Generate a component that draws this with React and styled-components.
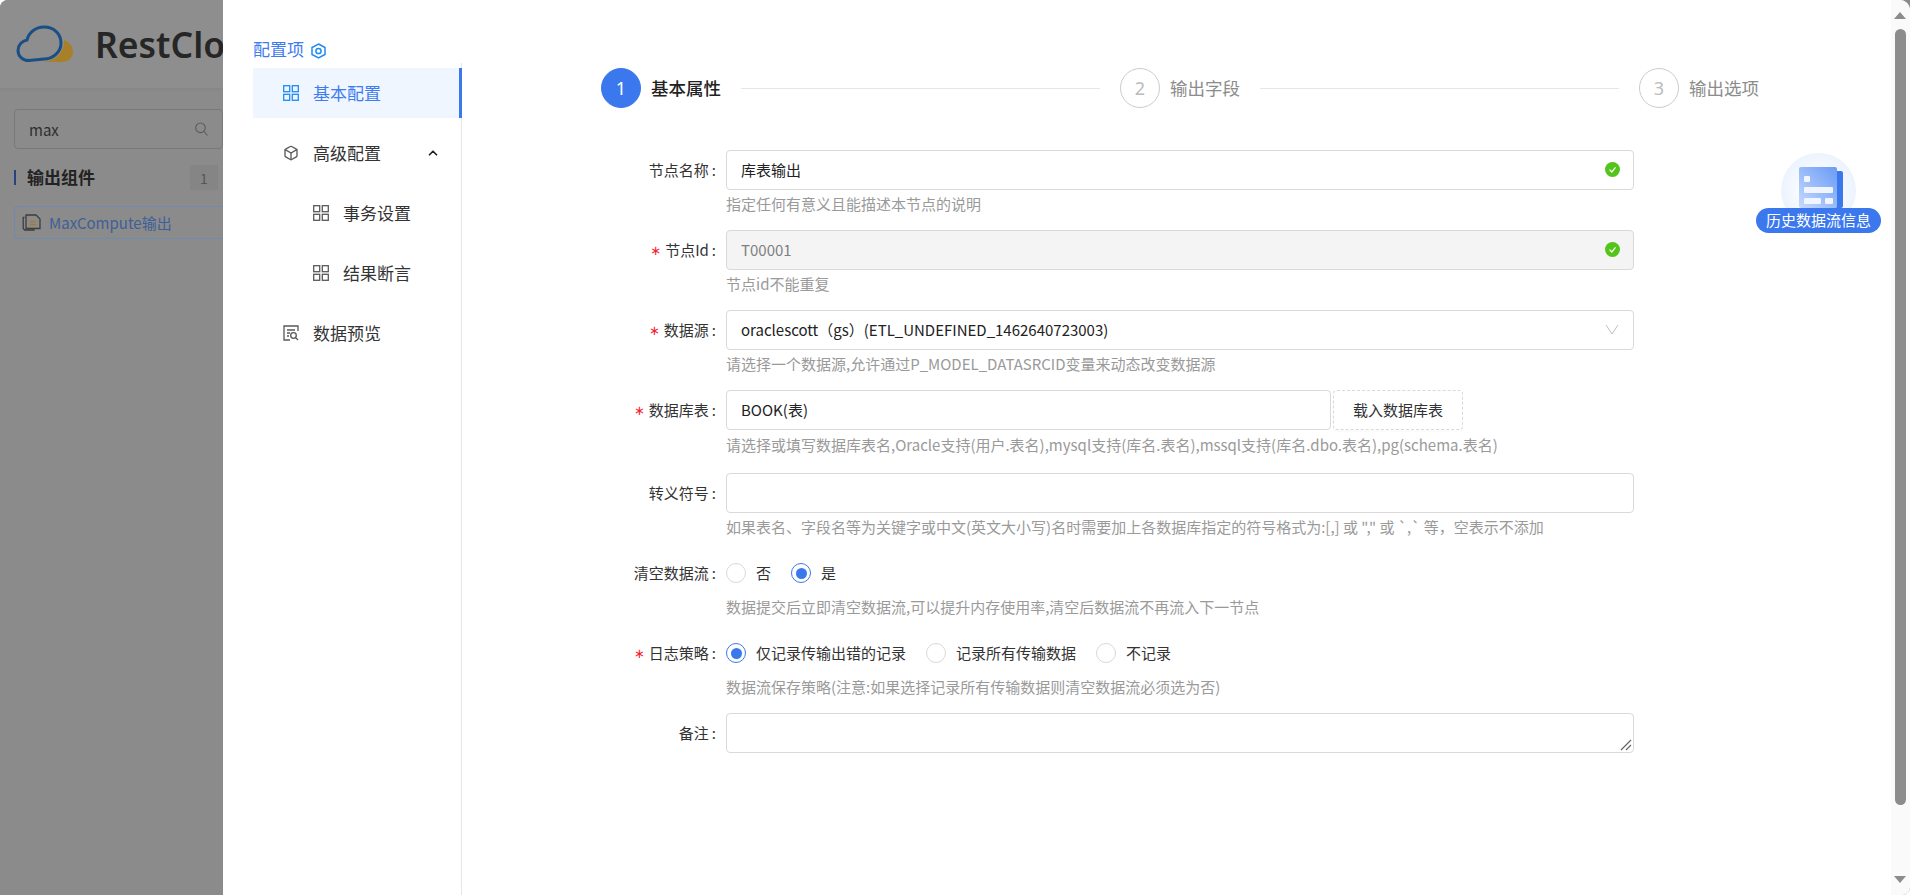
import React from 'react';
import styled, { createGlobalStyle } from 'styled-components';
import { LuBox, LuChevronUp } from 'react-icons/lu';

const Global = createGlobalStyle`
  html, body { margin: 0; padding: 0; overflow: hidden; background: #fff; }
  * { box-sizing: border-box; }
  body { font-family: "Noto Sans CJK SC", "Noto Sans", sans-serif; font-size: 15px; color: #333; }
`;
const Page = styled.div`position: relative; width: 1910px; height: 895px; overflow: hidden; background: #8b8b8b; border-radius: 8px 0 8px 0;`;
const Backdrop = styled.aside`width: 223px; height: 100%; overflow: hidden; display: flex; flex-direction: column;`;
const TopBar = styled.header`height: 88px; padding: 24px 0 0 16px; display: flex; align-items: flex-start; gap: 21px; background: #8e8e8e; box-shadow: 0 1px 3px rgba(0,0,0,.05); flex: none; white-space: nowrap;`;
const LogoMark = styled.svg`flex: none; margin-top: 1px;`;
const Brand = styled.div`font: 600 35.5px/40px "Noto Sans", sans-serif; color: #262626;`;
const SearchBox = styled.div`margin: 21px 0 0 14px; width: 209px; height: 40px; border: 1px solid #787878; border-radius: 4px; display: flex; align-items: center; padding: 0 14px; justify-content: space-between; color: #2e2e2e; flex: none;`;
const GroupRow = styled.div`margin: 16px 0 0 14px; height: 25px; width: 204px; display: flex; align-items: center; justify-content: space-between;`;
const GroupTitle = styled.div`border-left: 2px solid #26437f; padding-left: 11px; height: 15px; line-height: 14px; font-size: 17px; font-weight: 700; color: #222;`;
const GroupCount = styled.div`width: 28px; height: 25px; background: #858585; color: #555; text-align: center; line-height: 27px; font-size: 14px;`;
const CompItem = styled.div`margin: 16px 0 0 14px; height: 33px; width: 220px; border: 1px solid #6e8aad; border-right: 0; border-radius: 4px 0 0 4px; display: flex; align-items: center; padding-left: 7px; gap: 8px; color: #3e5f98; white-space: nowrap; flex: none;`;

const Drawer = styled.div`position: absolute; top: 0; right: 0; bottom: 0; left: 223px; background: #fff; display: flex; border-radius: 0 10px 8px 0;`;
const Sidebar = styled.nav`width: 239px; flex: none; padding: 37px 0 0 30px;`;
const SideTitle = styled.div`height: 26px; padding-bottom: 2px; display: flex; align-items: center; gap: 7px; font-size: 17px; line-height: 24px; color: #3f7cf0;`;
const TitleIcon = styled.span`display: flex; margin-top: 3px;`;
const Menu = styled.ul`margin: 0; padding: 5px 0 0; list-style: none; border-right: 1px solid #e6e6e6; height: 832px; display: flex; flex-direction: column; gap: 10px;`;
const Item = styled.li`height: 50px; display: flex; align-items: center; padding-left: ${p => p.$sub ? 60 : 30}px; gap: 14px; font-size: 17px; color: ${p => p.$active ? '#3f7cf0' : '#333'}; background: ${p => p.$active ? '#eff6ff' : 'transparent'}; border-right: ${p => p.$active ? '3px solid #3b78ee' : '0'}; margin-right: ${p => p.$active ? '-1px' : '0'};`;
const ItemText = styled.span`margin-bottom: 2px;`;
const Caret = styled.span`margin-left: auto; margin-right: 21px; display: flex; color: #222;`;

const Main = styled.main`flex: 1; min-width: 0; position: relative; padding: 68px 0 0 139px;`;
const Steps = styled.ol`margin: 0; padding: 0; list-style: none; display: flex; align-items: center; width: 1158px; height: 40px;`;
const Step = styled.li`display: flex; align-items: center; gap: 10px; flex: none; font-size: 17.5px; color: ${p => p.$on ? '#222' : '#8c8c8c'}; font-weight: ${p => p.$on ? 500 : 400};`;
const StepText = styled.span`margin-bottom: 2px;`;
const StepDot = styled.span`width: 40px; height: 40px; border-radius: 50%; display: flex; align-items: center; justify-content: center; font: 18px "Noto Sans", sans-serif; background: ${p => p.$on ? '#3b78ee' : '#fff'}; color: ${p => p.$on ? '#fff' : '#bbb'}; border: 1px solid ${p => p.$on ? '#3b78ee' : '#ccc'};`;
const StepLine = styled.li`flex: 1; height: 1px; background: #e6e6e6; margin: 0 20px;`;

const Form = styled.div`margin: 42px 0 0 0; display: flex; flex-direction: column;`;
const Row = styled.div`display: grid; grid-template-columns: 726px 1fr; margin-left: -601px; min-height: 80px; margin-bottom: ${p => p.$extra || 0}px; align-items: start;`;
const Label = styled.label`grid-column: 1; justify-self: end; height: 40px; padding: 0 10px 2px 0; font-size: 15px; color: #333; display: flex; align-items: center; white-space: nowrap;
  &::after { content: ':'; margin-left: 3px; }`;
const Star = styled.span`color: #f5222d; font-size: 13px; margin-right: 4px; font-family: "DejaVu Sans", sans-serif; line-height: 1; margin-top: 2px;`;
const Field = styled.div`grid-column: 2; width: ${p => p.$w || 908}px;`;
const Line = styled.div`display: flex; gap: 2px;`;
const InputBox = styled.div`flex: 1; height: 40px; border: 1px solid #d9d9d9; border-radius: 4px; background: ${p => p.$off ? '#f4f4f4' : '#fff'}; padding: 0 13px 2px 14px; display: flex; align-items: center; justify-content: space-between; color: ${p => p.$off ? '#808080' : '#222'}; font-size: 15px; white-space: nowrap;`;
const Hint = styled.div`font-size: 15px; line-height: 22px; color: #9a9a9a; padding-top: ${p => p.$top || 3}px; white-space: nowrap;`;
const LoadBtn = styled.button`width: 130px; height: 40px; border: 1px dashed #d9d9d9; border-radius: 4px; background: #fff; font: 15px "Noto Sans CJK SC", sans-serif; color: #333; padding: 0 0 2px; box-shadow: 0 2px 0 rgba(0,0,0,.015);`;
const Radios = styled.div`height: 40px; display: flex; align-items: center; gap: 20px;`;
const RadioOpt = styled.span`display: flex; align-items: center; gap: 10px; font-size: 15px; color: #333;`;
const RadioText = styled.span`margin-bottom: 2px;`;
const RadioDot = styled.i`width: 20px; height: 20px; border-radius: 50%; display: block; border: 1px solid ${p => p.$on ? '#3b78ee' : '#d9d9d9'}; background: #fff; position: relative;
  &::after { content: ''; display: ${p => p.$on ? 'block' : 'none'}; position: absolute; inset: 3.5px; border-radius: 50%; background: #3b78ee; }`;
const Area = styled.div`position: relative; height: 40px; border: 1px solid #d9d9d9; border-radius: 4px; background: #fff;`;
const Grip = styled.svg`position: absolute; right: 1px; bottom: 1px;`;

const HistoryWrap = styled.div`position: absolute; left: 1294px; top: 153px; width: 125px; height: 80px; display: flex; flex-direction: column; align-items: center;`;
const HistoryOrb = styled.div`width: 75px; height: 75px; border-radius: 50%; background: radial-gradient(circle, #fff 20%, #e6f0fe 85%); flex: none;`;
const BookMark = styled.svg`position: absolute; left: 43px; top: 14px;`;
const HistoryPill = styled.div`position: absolute; left: 0; right: 0; top: 55px; height: 25px; border-radius: 13px; background: #3b78ee; color: #fff; font-size: 15px; line-height: 23px; text-align: center; white-space: nowrap;`;

const Rail = styled.div`width: 19px; flex: none; background: #fafafa; border-radius: 0 10px 8px 0; display: flex; flex-direction: column; align-items: center; position: relative;`;
const RailThumb = styled.div`margin-top: 29px; width: 11px; height: 776px; border-radius: 6px; background: #8c8c8c; flex: none;`;
const Arrow = styled.div`position: absolute; left: 3px; width: 0; height: 0; border-left: 6.5px solid transparent; border-right: 6.5px solid transparent; ${p => p.$up ? 'top: 12px; border-bottom: 7px solid #8c8c8c;' : 'bottom: 12px; border-top: 7px solid #8c8c8c;'}`;

const Grid = ({ c = '#595959' }) => (
  <svg width="16" height="16" viewBox="0 0 16 16" fill="none" stroke={c} strokeWidth="1.3">
    <rect x=".7" y=".7" width="6" height="6" /><rect x="9.3" y=".7" width="6" height="6" />
    <rect x=".7" y="9.3" width="6" height="6" /><rect x="9.3" y="9.3" width="6" height="6" />
  </svg>
);
const Preview = () => (
  <svg width="16" height="16" viewBox="0 0 16 16" fill="none" stroke="#595959" strokeWidth="1.3">
    <path d="M15 6V1H1v14h6" /><path d="M4 5h8M4 8h3M4 11h2" /><circle cx="10.5" cy="10.5" r="2.8" /><path d="M12.6 12.6 15 15" />
  </svg>
);
const Hex = () => (
  <svg width="15" height="16" viewBox="0 0 15 16" fill="none" stroke="#1f8bf5" strokeWidth="1.5">
    <path d="M7.5 1 14 4.5v7L7.5 15 1 11.5v-7z" /><circle cx="7.5" cy="8" r="2.6" />
  </svg>
);
const Check = () => (
  <svg width="15" height="15" viewBox="0 0 15 15">
    <circle cx="7.5" cy="7.5" r="7.5" fill="#52c41a" /><path d="M4.5 7.6 6.8 10l3.7-4.6" fill="none" stroke="#fff" strokeWidth="1.2" />
  </svg>
);
const Logo = () => (
  <LogoMark width="58" height="38" viewBox="0 0 58 38" fill="none">
    <path d="M27 37c9-1 16-5 19-12 2-3 2-7 2-10 5 2 9 6 9 12 0 6-5 10-11 10z" fill="#a8802a" />
    <path d="M13 35.5C6.500 35.500 2 31 2 25.500 2 20 6 16 11 15 13 7 20 2 28 2c10 0 17 7 17 16 0 9-8 16-17 16z" stroke="#1a4f86" strokeWidth="3" />
  </LogoMark>
);
const Search = () => (
  <svg width="13" height="14" viewBox="0 0 13 14" fill="none" stroke="#5a5a5a" strokeWidth="1.1">
    <circle cx="5.500" cy="5.800" r="4.800" /><path d="M9 9.500l3.500 4" />
  </svg>
);
const Doc = () => (
  <svg width="19" height="17" viewBox="0 0 19 17" fill="none" stroke="#3d3d3d" strokeWidth="1.3">
    <path d="M2.500 3.500H1.200v11l1.500 1.500h10" /><path d="M4 1h10l4 4v9.500H4z" /><path d="M8 7.500h6M8 10.500h6" stroke="#a37b2d" />
  </svg>
);
const Book = () => (
  <BookMark width="44" height="41" viewBox="0 0 44 41">
    <defs><linearGradient id="bk" x1="0" y1="1" x2="1" y2="0"><stop offset="0" stopColor="#c6dafd" /><stop offset="1" stopColor="#6a9bf6" /></linearGradient></defs>
    <rect x="36" y="4" width="8" height="37" rx="2" fill="#3b78ee" />
    <rect x="0" y="0" width="38" height="41" rx="2" fill="url(#bk)" />
    <g fill="#f0f5ff"><rect x="5" y="9" width="6" height="6" rx="1" /><rect x="5" y="20" width="29" height="6" rx="1" /><rect x="5" y="31" width="17" height="6" rx="1" /><rect x="26" y="31" width="8" height="6" rx="1" /></g>
  </BookMark>
);
const Chev = () => (
  <svg width="16" height="16" viewBox="0 0 16 16" fill="none" stroke="#bfbfbf" strokeWidth="1"><path d="M2 4l6 9 6-9" /></svg>
);

const Rd = ({ on, children }) => <RadioOpt><RadioDot $on={on} /><RadioText>{children}</RadioText></RadioOpt>;

export default function App() {
  return (
    <Page>
      <Global />
      <Backdrop>
        <TopBar><Logo /><Brand>RestCloud</Brand></TopBar>
        <SearchBox>max<Search /></SearchBox>
        <GroupRow><GroupTitle>输出组件</GroupTitle><GroupCount>1</GroupCount></GroupRow>
        <CompItem><Doc />MaxCompute输出</CompItem>
      </Backdrop>
      <Drawer>
        <Sidebar>
          <SideTitle>配置项<TitleIcon><Hex /></TitleIcon></SideTitle>
          <Menu>
            <Item $active><Grid c="#1f8bf5" /><ItemText>基本配置</ItemText></Item>
            <Item><LuBox size={16} color="#595959" /><ItemText>高级配置</ItemText><Caret><LuChevronUp size={14} strokeWidth={3} /></Caret></Item>
            <Item $sub><Grid /><ItemText>事务设置</ItemText></Item>
            <Item $sub><Grid /><ItemText>结果断言</ItemText></Item>
            <Item><Preview /><ItemText>数据预览</ItemText></Item>
          </Menu>
        </Sidebar>
        <Main>
          <Steps>
            <Step $on><StepDot $on>1</StepDot><StepText>基本属性</StepText></Step>
            <StepLine />
            <Step><StepDot>2</StepDot><StepText>输出字段</StepText></Step>
            <StepLine />
            <Step><StepDot>3</StepDot><StepText>输出选项</StepText></Step>
          </Steps>
          <Form>
            <Row>
              <Label>节点名称</Label>
              <Field><InputBox>库表输出<Check /></InputBox><Hint>指定任何有意义且能描述本节点的说明</Hint></Field>
            </Row>
            <Row>
              <Label><Star>∗</Star>节点Id</Label>
              <Field><InputBox $off>T00001<Check /></InputBox><Hint>节点id不能重复</Hint></Field>
            </Row>
            <Row>
              <Label><Star>∗</Star>数据源</Label>
              <Field><InputBox>oraclescott（gs）(ETL_UNDEFINED_1462640723003)<Chev /></InputBox><Hint>请选择一个数据源,允许通过P_MODEL_DATASRCID变量来动态改变数据源</Hint></Field>
            </Row>
            <Row $extra={3}>
              <Label><Star>∗</Star>数据库表</Label>
              <Field $w={737}><Line><InputBox>BOOK(表)</InputBox><LoadBtn type="button">载入数据库表</LoadBtn></Line><Hint $top={4}>请选择或填写数据库表名,Oracle支持(用户.表名),mysql支持(库名.表名),mssql支持(库名.dbo.表名),pg(schema.表名)</Hint></Field>
            </Row>
            <Row>
              <Label>转义符号</Label>
              <Field><InputBox /><Hint>如果表名、字段名等为关键字或中文(英文大小写)名时需要加上各数据库指定的符号格式为:[,] 或 "," 或 `,` 等，空表示不添加</Hint></Field>
            </Row>
            <Row>
              <Label>清空数据流</Label>
              <Field><Radios><Rd>否</Rd><Rd on>是</Rd></Radios><Hint>数据提交后立即清空数据流,可以提升内存使用率,清空后数据流不再流入下一节点</Hint></Field>
            </Row>
            <Row>
              <Label><Star>∗</Star>日志策略</Label>
              <Field><Radios><Rd on>仅记录传输出错的记录</Rd><Rd>记录所有传输数据</Rd><Rd>不记录</Rd></Radios><Hint>数据流保存策略(注意:如果选择记录所有传输数据则清空数据流必须选为否)</Hint></Field>
            </Row>
            <Row>
              <Label>备注</Label>
              <Field><Area><Grip width="13" height="13" viewBox="0 0 13 13" stroke="#666" strokeWidth="1.2"><path d="M2 12 12 2M7 12l5-5" /></Grip></Area></Field>
            </Row>
          </Form>
          <HistoryWrap><HistoryOrb /><Book /><HistoryPill>历史数据流信息</HistoryPill></HistoryWrap>
        </Main>
        <Rail><Arrow $up /><RailThumb /><Arrow /></Rail>
      </Drawer>
    </Page>
  );
}
